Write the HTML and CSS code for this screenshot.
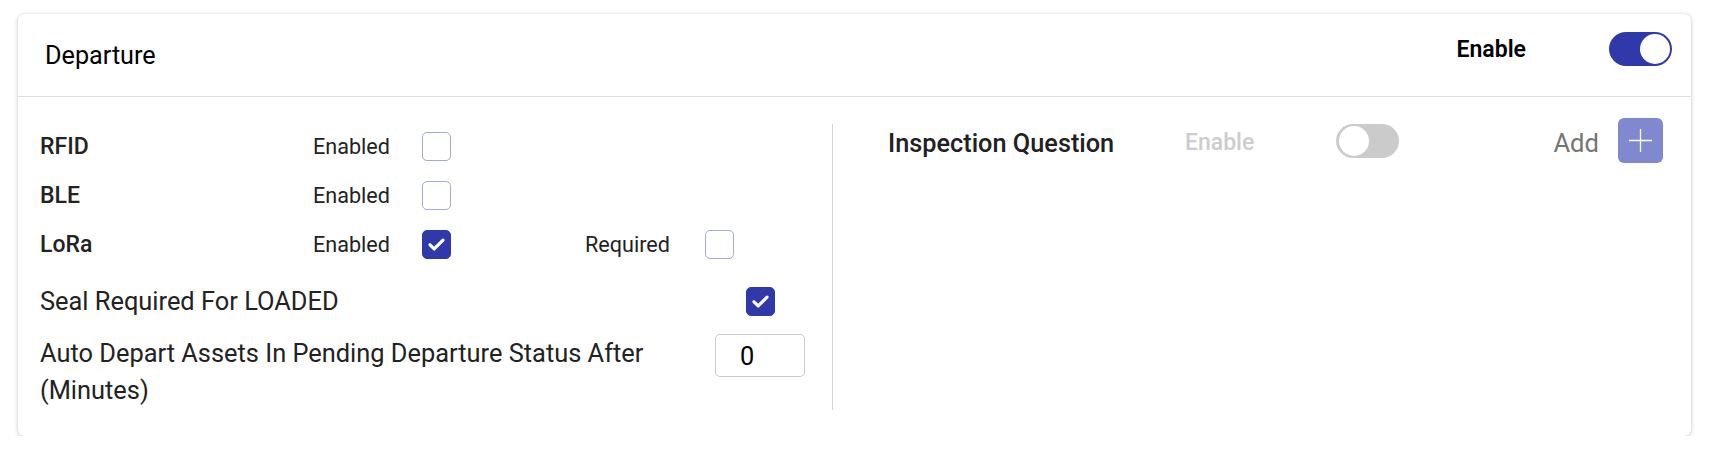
FILE: index.html
```html
<!DOCTYPE html>
<html lang="en">
<head>
<meta charset="utf-8">
<title>Departure</title>
<link rel="stylesheet" href="styles.css">
</head>
<body>
<div class="card">
  <div class="card-header">
    <div class="title">Departure</div>
    <div class="header-right">
      <span class="enable-label">Enable</span>
      <span class="toggle on"><span class="knob"></span></span>
    </div>
  </div>
  <div class="card-body">
    <div class="left-col">
      <div class="opt-rows">
        <div class="opt-row">
          <span class="opt-name">RFID</span>
          <span class="opt-text">Enabled</span>
          <span class="cb"></span>
        </div>
        <div class="opt-row">
          <span class="opt-name">BLE</span>
          <span class="opt-text">Enabled</span>
          <span class="cb"></span>
        </div>
        <div class="opt-row">
          <span class="opt-name">LoRa</span>
          <span class="opt-text">Enabled</span>
          <span class="cb checked"><svg viewBox="0 0 29 29" class="tick"><path d="M7.5 14.8 L12 19.3 L21.5 9.8"/></svg></span>
          <span class="opt-text req">Required</span>
          <span class="cb"></span>
        </div>
      </div>
      <div class="seal-row">
        <span class="big-text">Seal Required For LOADED</span>
        <span class="ctrl-col"><span class="cb checked"><svg viewBox="0 0 29 29" class="tick"><path d="M7.5 14.8 L12 19.3 L21.5 9.8"/></svg></span></span>
      </div>
      <div class="auto-row">
        <span class="big-text auto-text">Auto Depart Assets In Pending Departure Status After (Minutes)</span>
        <span class="ctrl-col"><span class="num-input">0</span></span>
      </div>
    </div>
    <div class="right-col">
      <div class="iq-row">
        <span class="iq-title">Inspection Question</span>
        <span class="iq-enable">Enable</span>
        <span class="toggle off"><span class="knob"></span></span>
        <span class="spacer"></span>
        <span class="add-label">Add</span>
        <span class="add-btn"><svg viewBox="0 0 45 45" class="plus"><path d="M22.5 11 V34 M11 22.5 H34"/></svg></span>
      </div>
    </div>
  </div>
</div>
</body>
</html>
```
FILE: styles.css
```css
* { box-sizing: border-box; }
html, body { margin: 0; padding: 0; background: #fff; }
body {
  font-family: Roboto, "Liberation Sans", Arial, sans-serif;
  color: #212121;
}
.card {
  margin: 14px 18px 0 18px;
  background: #fff;
  border-radius: 6px;
  box-shadow: 0 1px 4px rgba(0,0,0,0.22), 0 0 1px rgba(0,0,0,0.12);
}
.card-header {
  height: 83px;
  border-bottom: 1px solid #dedede;
  display: flex;
  align-items: center;
  justify-content: space-between;
  padding: 0 19px 0 27px;
}
.title {
  font-size: 25.2px;
  color: #000;
  font-weight: 400;
  margin-top: 0;
}
.header-right {
  display: flex;
  align-items: center;
  margin-top: -13px;
}
.enable-label {
  font-size: 23px;
  font-weight: 600;
  color: #000;
  margin-right: 83px;
  margin-top: 2px;
}
.toggle {
  position: relative;
  display: inline-block;
  width: 63px;
  height: 34px;
  border-radius: 17px;
  flex: none;
}
.toggle .knob {
  position: absolute;
  top: 2px;
  width: 30px;
  height: 30px;
  border-radius: 50%;
  background: #fff;
}
.toggle.on { background: #2f39a9; }
.toggle.on .knob { right: 2px; }
.toggle.off { background: #cbcbcb; }
.toggle.off .knob { left: 3px; }

.card-body {
  display: flex;
  padding: 21px 28px 26px 22px;
}
.left-col {
  width: 793px;
  margin-top: 6px;
  padding: 0 27px 1px 0;
  border-right: 1px solid #d4d4d4;
  flex: none;
}
.opt-rows {
  display: flex;
  flex-direction: column;
  gap: 5px;
}
.opt-row {
  display: flex;
  align-items: center;
  height: 44px;
}
.opt-name {
  width: 275px;
  font-size: 23px;
  font-weight: 500;
  color: #222;
  margin-top: 1px;
}
.opt-text {
  width: 107px;
  font-size: 21.6px;
  color: #222;
  margin-left: -2px;
  margin-right: 2px;
}
.opt-text.req {
  width: 118px;
  margin-left: 134px;
}
.cb {
  width: 29px;
  height: 29px;
  border: 1.5px solid #a3a8e2;
  border-radius: 5px;
  display: inline-flex;
  align-items: center;
  justify-content: center;
  flex: none;
}
.cb.checked {
  background: #2f39a9;
  border-color: #2f39a9;
}
.tick {
  width: 29px;
  height: 29px;
  fill: none;
  stroke: #fff;
  stroke-width: 3.4;
  stroke-linecap: round;
  stroke-linejoin: round;
}
.big-text {
  font-size: 25.4px;
  color: #222;
  line-height: 37px;
}
.seal-row {
  display: flex;
  align-items: center;
  height: 44px;
  margin-top: 13px;
}
.seal-row .big-text { flex: 1; margin-top: 1px; }
.ctrl-col {
  width: 90px;
  display: flex;
  justify-content: center;
  flex: none;
}
.auto-row {
  display: flex;
  align-items: flex-start;
  margin-top: 11px;
}
.auto-text {
  flex: 1;
  padding-right: 40px;
  margin-top: 1px;
}
.num-input {
  width: 90px;
  height: 43px;
  border: 1px solid #cacaca;
  border-radius: 5px;
  font-size: 25.4px;
  color: #000;
  padding-left: 24px;
  display: flex;
  align-items: center;
}
.right-col {
  flex: 1;
  padding-left: 55px;
}
.iq-row {
  display: flex;
  align-items: center;
  height: 45px;
}
.iq-title {
  width: 297px;
  font-size: 25.3px;
  font-weight: 500;
  color: #212121;
  margin-top: 5px;
}
.iq-enable {
  width: 151px;
  font-size: 23px;
  font-weight: 500;
  color: #cdcdcd;
  margin-top: 3px;
}
.spacer { flex: 1; }
.add-label {
  font-size: 25.6px;
  color: #757575;
  margin-right: 19px;
  margin-top: 4px;
}
.add-btn {
  width: 45px;
  height: 45px;
  border-radius: 6px;
  background: #8088d0;
  display: inline-flex;
  flex: none;
}
.plus {
  width: 45px;
  height: 45px;
  fill: none;
  stroke: #fff;
  stroke-width: 1.3;
}
```
